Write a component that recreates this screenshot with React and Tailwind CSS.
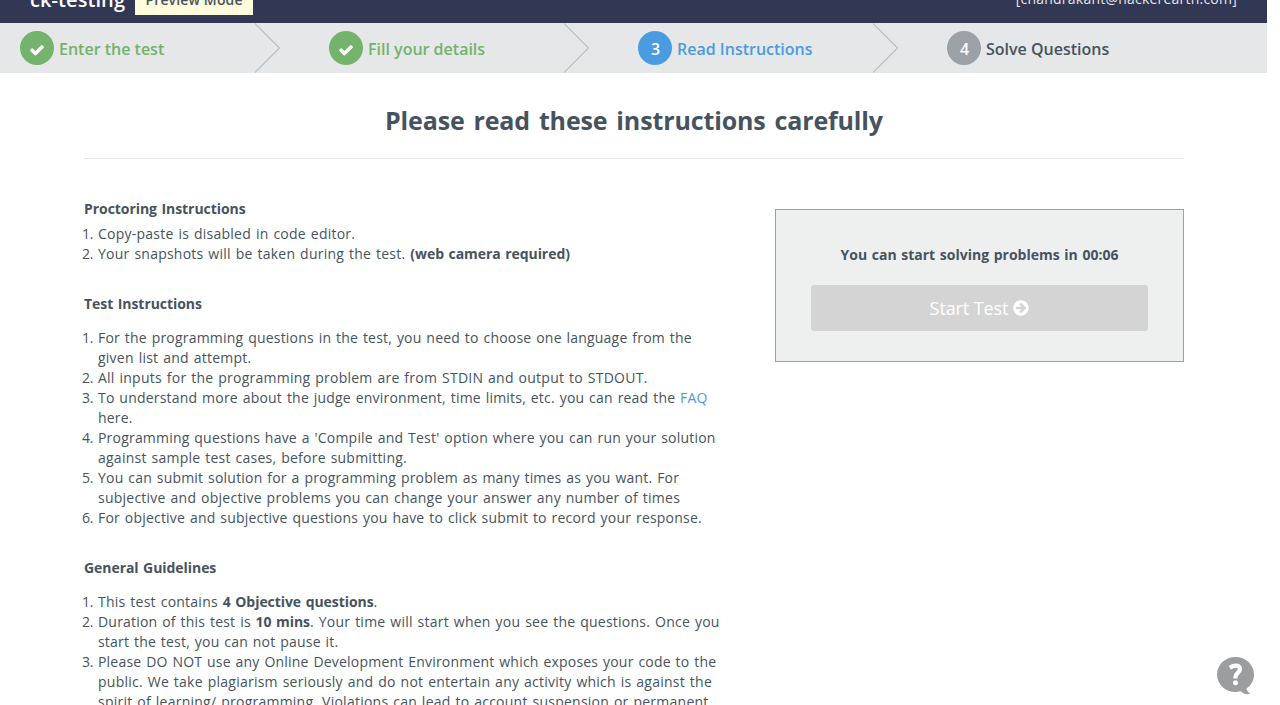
import React from "react";

function CheckIcon() {
  return (
    <svg viewBox="0 0 1792 1792" className="mt-0.5 mr-px h-4 w-4" fill="currentColor">
      <path d="M1671 566q0 40-28 68l-724 724-136 136q-28 28-68 28t-68-28l-136-136-362-362q-28-28-28-68t28-68l136-136q28-28 68-28t68 28l294 295 656-657q28-28 68-28t68 28l136 136q28 28 28 68z" />
    </svg>
  );
}

function ArrowCircleIcon() {
  return (
    <svg viewBox="0 0 1792 1792" className="h-[18px] w-[18px]" fill="currentColor">
      <path d="M1413 896q0-27-18-45l-362-362-91-91q-18-18-45-18t-45 18l-91 91q-18 18-18 45t18 45l189 189h-502q-26 0-45 19t-19 45v128q0 26 19 45t45 19h502l-189 189q-19 19-19 45t19 45l91 91q18 18 45 18t45-18l91-91 362-362q18-18 18-45zm251 0q0 209-103 385.5t-279.5 279.5-385.5 103-385.5-103-279.5-279.5-103-385.5 103-385.5 279.5-279.5 385.5-103 385.5 103 279.5 279.5 103 385.5z" />
    </svg>
  );
}

const steps = [
  { label: "Enter the test", mark: <CheckIcon />, circle: "bg-[#73b36b]", text: "text-[#73b36b]" },
  { label: "Fill your details", mark: <CheckIcon />, circle: "bg-[#73b36b]", text: "text-[#73b36b]" },
  { label: "Read Instructions", mark: "3", circle: "bg-[#4b9be0]", text: "text-[#4b9be0]" },
  { label: "Solve Questions", mark: "4", circle: "bg-[#9aa1a7]", text: "text-[#46535e]" },
];

function Step({ step, last }) {
  return (
    <li className="flex h-[50px] w-[309px] shrink-0 items-center">
      <span className={`flex h-[34px] w-[34px] items-center justify-center rounded-full pt-0.5 pl-px text-base leading-8 font-semibold text-white ${step.circle}`}>
        {step.mark}
      </span>
      <span className={`ml-[5px] grow pt-0.5 text-base font-semibold ${step.text}`}>{step.label}</span>
      {!last && (
        <svg viewBox="0 0 26 50" className="mr-[48px] h-[50px] w-[26px]" fill="none" stroke="#bcbec0" strokeWidth="1.2">
          <path d="M0 .5L24.500 25L0 49.500" />
        </svg>
      )}
    </li>
  );
}

function Section({ title, gap, children }) {
  return (
    <section>
      <h2 className="text-sm leading-5 font-bold tracking-[-0.06px]">{title}</h2>
      <ol className={`list-decimal pl-3.5 text-sm leading-5 tracking-[0.2px] marker:tracking-[-0.1px] ${gap}`}>{children}</ol>
    </section>
  );
}

function Loose({ children }) {
  return <span className="tracking-[0.24px]">{children}</span>;
}

function Strong({ children }) {
  return <b className="tracking-[-0.06px]">{children}</b>;
}

export default function App() {
  return (
    <div className="h-[705px] w-[1280px] overflow-hidden bg-white font-['Open_Sans',sans-serif] text-[#46535e]">
      <div className="w-[1267px]">
        <header className="flex h-[23px] items-end justify-between overflow-hidden bg-[#323754] pr-[30px] pl-[30px]">
          <div className="flex items-end">
            <span className="mb-[9px] text-xl leading-7 font-semibold tracking-[0.08px] text-white">ck-testing</span>
            <span className="mb-2 ml-2.5 flex h-[30px] w-[118px] items-center justify-center bg-[#fffbdc] text-sm font-semibold tracking-[0.15px]">
              Preview Mode
            </span>
          </div>
          <span className="mb-3.5 text-sm leading-5 tracking-[0.22px] text-[#e4e7ea]">[chandrakant@hackerearth.com]</span>
        </header>

        <ol className="flex h-[50px] overflow-hidden bg-[#e5e7e9] pl-5">
          {steps.map((step, i) => (
            <Step key={step.label} step={step} last={i === steps.length - 1} />
          ))}
        </ol>

        <main className="ml-[84px] w-[1100px]">
          <h1 className="h-[86px] border-b border-[#e5e7e9] pt-[29px] text-center text-[25px] leading-9 font-bold tracking-[-0.13px] [word-spacing:2.5px]">
            Please read these instructions carefully
          </h1>

          <div className="flex items-start justify-between pt-10 [word-spacing:1px]">
            <div className="flex w-[645px] flex-col whitespace-nowrap">
              <Section title="Proctoring Instructions" gap="mt-[5px] mb-[30px]">
                <li><Loose>Copy-paste is disabled in code editor.</Loose></li>
                <li><Loose>Your snapshots will be taken during the test. </Loose><Strong>(web camera required)</Strong></li>
              </Section>
              <Section title="Test Instructions" gap="mt-3.5 mb-[30px]">
                <li>For the programming questions in the test, you need to choose one language from the<br /><Loose>given list and attempt.</Loose></li>
                <li><Loose>All inputs for the programming problem are from STDIN and output to STDOUT.</Loose></li>
                <li>To understand more about the judge environment, time limits, etc. you can read the <a className="text-[#4b9be0]">FAQ</a><br />here.</li>
                <li>Programming questions have a 'Compile and Test' option where you can run your solution<br /><Loose>against sample test cases, before submitting.</Loose></li>
                <li>You can submit solution for a programming problem as many times as you want. For<br /><Loose>subjective and objective problems you can change your answer any number of times</Loose></li>
                <li>For objective and subjective questions you have to click submit to record your response.</li>
              </Section>
              <Section title="General Guidelines" gap="mt-3.5">
                <li><Loose>This test contains </Loose><Strong>4 Objective questions</Strong>.</li>
                <li>Duration of this test is <Strong>10 mins</Strong>. <Loose>Your time will start when you see the questions. Once you</Loose><br />start the test, you can not pause it.</li>
                <li>Please DO NOT use any Online Development Environment which exposes your code to the<br /><Loose>public. We take plagiarism seriously and do not entertain any activity which is against the</Loose><br /><Loose>spirit of learning/ programming. Violations can lead to account suspension or permanent</Loose></li>
              </Section>
            </div>

            <aside className="mt-2.5 flex h-[153px] w-[409px] flex-col border border-[#9aa1a7] bg-[#eef0f0] px-[35px] pt-[35px]">
              <p className="text-center text-sm leading-5 font-bold">You can start solving problems in 00:06</p>
              <button className="mt-5 flex h-[46px] items-center justify-center gap-1 rounded-[3px] bg-[#d4d4d4] pl-px text-lg tracking-[-0.1px] text-white [word-spacing:0px]">
                Start Test <ArrowCircleIcon />
              </button>
            </aside>
          </div>
        </main>
      </div>

      <svg viewBox="0 0 38 38" className="absolute top-[657px] left-[1217px] h-[38px] w-[38px]">
        <path fill="#9b9d9f" d="M18.500 0C28.700 0 37 7.700 37 17.500C37 23.500 34 28.500 29.500 31.500C30 34 31 35.500 33.500 36.500C30 38 26.500 37 24 34.200C22.300 34.800 20.500 35 18.500 35C8.300 35 0 27.300 0 17.500C0 7.700 8.300 0 18.500 0Z" />
        <path fill="none" stroke="#fff" strokeWidth="4.200" d="M12.800 10.800C15 9.300 17 8.700 18.800 8.700C21.300 8.700 22.900 10 22.900 12.200C22.900 15.700 18.400 15.600 18.400 20.500V21.500" />
        <circle cx="18.500" cy="25.700" r="2.500" fill="#fff" />
      </svg>
    </div>
  );
}
